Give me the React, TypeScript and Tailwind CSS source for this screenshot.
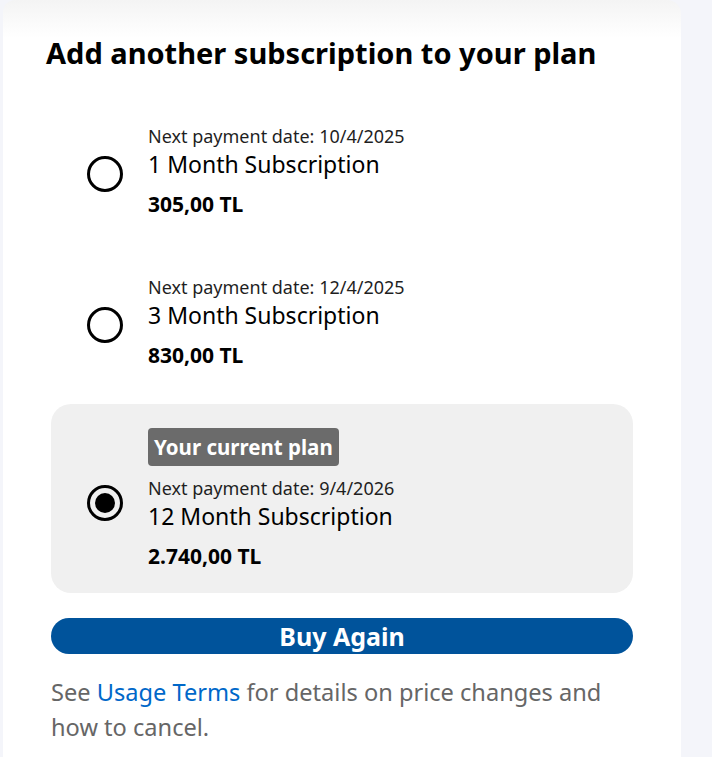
import React from "react";

const plans = [
  { date: "10/4/2025", name: "1 Month Subscription", price: "305,00 TL", current: false },
  { date: "12/4/2025", name: "3 Month Subscription", price: "830,00 TL", current: false },
  { date: "9/4/2026", name: "12 Month Subscription", price: "2.740,00 TL", current: true },
];

function Radio({ checked }: { checked: boolean }) {
  return (
    <svg width="36" height="36" viewBox="0 0 36 36" className="shrink-0">
      <circle cx="18" cy="18" r="16.5" fill="none" stroke="#000" strokeWidth="3" />
      {checked && <circle cx="18" cy="18" r="10" fill="#000" />}
    </svg>
  );
}

export default function App() {
  return (
    <div className="w-[712px] h-[757px] bg-[#f4f5fa] overflow-hidden" style={{ fontFamily: '"Noto Sans", sans-serif' }}>
      <div className="ml-[3px] w-[678px] h-full rounded-tl-[12px] rounded-tr-[14px] bg-gradient-to-b from-[#f4f4f4] via-white via-[5%] to-white">
        <h1 className="pl-[43px] pt-[35px] text-[29px] leading-[36px] font-bold text-black">
          Add another subscription to your plan
        </h1>
        <div className="ml-[48px] w-[582px] mt-[31px] flex flex-col gap-[13px]">
          {plans.map((p) => (
            <div
              key={p.name}
              className={`flex items-center pt-[24px] pl-[36px] rounded-[20px] ${p.current ? "bg-[#f0f0f0] pb-[25px]" : "pb-[24px]"}`}
            >
              <div className={p.current ? "mt-[10px]" : "mt-[6px]"}>
                <Radio checked={p.current} />
              </div>
              <div className="ml-[25px] flex flex-col">
                {p.current && (
                  <div className="self-start mb-[12px] h-[38px] px-[6px] rounded-[4px] bg-[#6b6b6b] text-white font-bold text-[20.5px] leading-[38px]">
                    Your current plan
                  </div>
                )}
                <div className="text-[18px] leading-[20px] text-[#1f1f1f]">Next payment date: {p.date}</div>
                <div className="mt-[4px] text-[23px] leading-[28px] text-black">{p.name}</div>
                <div className="mt-[14px] text-[21px] leading-[24px] font-bold text-black">{p.price}</div>
              </div>
            </div>
          ))}
        </div>
        <div className="ml-[48px] w-[582px]">
          <button className="mt-[25px] w-full h-[36px] rounded-full bg-[#00539b] text-white font-bold text-[25px] leading-[36px]">
            Buy Again
          </button>
          <p className="mt-[21px] text-[23.6px] leading-[35px] text-[#666666]">
            See <a className="text-[#0068c9]">Usage Terms</a> for details on price changes and how to cancel.
          </p>
        </div>
      </div>
    </div>
  );
}
